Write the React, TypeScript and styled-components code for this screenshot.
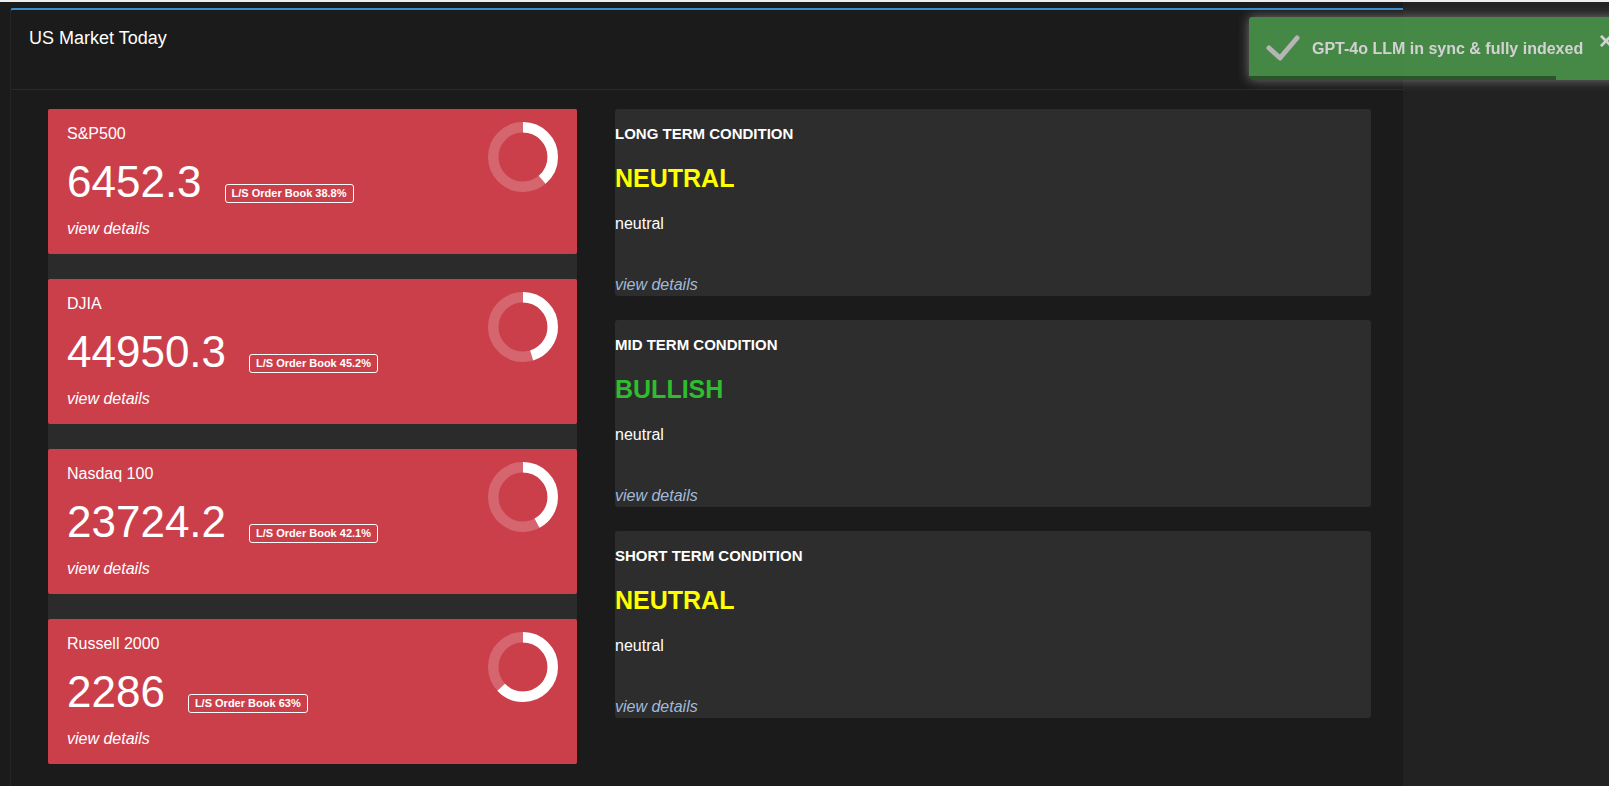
import React from "react";
import styled, { createGlobalStyle } from "styled-components";

const GlobalStyle = createGlobalStyle`
  html, body {
    margin: 0;
    padding: 0;
    overflow: hidden;
    background: #222222;
    font-family: "Liberation Sans", Arial, sans-serif;
  }
`;

type IndexCard = {
  name: string;
  value: string;
  book: number;
};

type Condition = {
  title: string;
  state: string;
  tone: "neutral" | "bullish";
  note: string;
};

const indexes: IndexCard[] = [
  { name: "S&P500", value: "6452.3", book: 38.8 },
  { name: "DJIA", value: "44950.3", book: 45.2 },
  { name: "Nasdaq 100", value: "23724.2", book: 42.1 },
  { name: "Russell 2000", value: "2286", book: 63 },
];

const conditions: Condition[] = [
  { title: "LONG TERM CONDITION", state: "NEUTRAL", tone: "neutral", note: "neutral" },
  { title: "MID TERM CONDITION", state: "BULLISH", tone: "bullish", note: "neutral" },
  { title: "SHORT TERM CONDITION", state: "NEUTRAL", tone: "neutral", note: "neutral" },
];

function Donut({ percent }: { percent: number }) {
  const r = 29.75;
  const circ = 2 * Math.PI * r;
  const filled = (percent / 100) * circ;
  return (
    <DonutSvg width="70" height="70" viewBox="0 0 70 70">
      <circle cx="35" cy="35" r={r} fill="none" stroke="rgba(255,255,255,0.2)" strokeWidth="10.5" />
      <circle
        cx="35"
        cy="35"
        r={r}
        fill="none"
        stroke="#ffffff"
        strokeWidth="10.5"
        strokeDasharray={`${filled} ${circ}`}
        transform="rotate(-90 35 35)"
      />
    </DonutSvg>
  );
}

export default function App() {
  return (
    <>
      <GlobalStyle />
      <TopStrip />
      <Layout>
        <Main>
          <Panel>
            <PanelHeader>
              <PanelTitle>US Market Today</PanelTitle>
            </PanelHeader>
            <PanelBody>
              <IndexColumn>
                {indexes.map((item) => (
                  <MarketCard key={item.name}>
                    <CardInfo>
                      <IndexName>{item.name}</IndexName>
                      <ValueRow>
                        <BigValue>{item.value}</BigValue>
                        <BookBadge>L/S Order Book {item.book}%</BookBadge>
                      </ValueRow>
                      <CardLink>view details</CardLink>
                    </CardInfo>
                    <Donut percent={item.book} />
                  </MarketCard>
                ))}
              </IndexColumn>
              <ConditionColumn>
                {conditions.map((c) => (
                  <ConditionCard key={c.title}>
                    <ConditionTitle>{c.title}</ConditionTitle>
                    <ConditionState $tone={c.tone}>{c.state}</ConditionState>
                    <ConditionNote>{c.note}</ConditionNote>
                    <ConditionLink>view details</ConditionLink>
                  </ConditionCard>
                ))}
              </ConditionColumn>
            </PanelBody>
          </Panel>
        </Main>
        <Sidebar />
      </Layout>
      <Toast>
        <ToastCheck width="34" height="26" viewBox="0 0 34 26">
          <polyline
            points="3,13 14,23 31,3"
            fill="none"
            stroke="#dcdcdc"
            strokeWidth="5"
            strokeLinecap="round"
            strokeLinejoin="round"
          />
        </ToastCheck>
        <ToastText>GPT-4o LLM in sync &amp; fully indexed</ToastText>
        <ToastClose>×</ToastClose>
        <ToastProgress style={{ width: 307 }} />
      </Toast>
    </>
  );
}

const TopStrip = styled.div`
  height: 2px;
  background: #ededed;
`;

const Layout = styled.div`
  display: flex;
  height: 784px;
`;

const Main = styled.div`
  width: 1403px;
  background: #1b1b1b;
  padding: 6px 0 0 10px;
  box-sizing: border-box;
  display: flex;
`;

const Sidebar = styled.div`
  flex: 1;
  background: #222222;
`;

const Panel = styled.section`
  flex: 1;
  background: #1b1b1b;
  border-top: 2px solid #3a8fd3;
  border-left: 1px solid #252525;
  border-radius: 3px 0 0 0;
  display: flex;
  flex-direction: column;
`;

const PanelHeader = styled.header`
  height: 80px;
  box-sizing: border-box;
  padding: 18px 18px 0;
  border-bottom: 1px solid #2a2a2a;
`;

const PanelTitle = styled.h3`
  margin: 0;
  font-size: 18px;
  line-height: 20px;
  font-weight: normal;
  color: #ffffff;
`;

const PanelBody = styled.div`
  display: flex;
  align-items: flex-start;
  gap: 38px;
  padding: 19px 31px 0 37px;
`;

const IndexColumn = styled.div`
  width: 529px;
  display: flex;
  flex-direction: column;
  gap: 25px;
  background: #2b2b2b;
`;

const MarketCard = styled.div`
  height: 145px;
  box-sizing: border-box;
  background: #cb3f4b;
  border-radius: 2px;
  padding: 15px 19px 0;
  display: flex;
  justify-content: space-between;
  align-items: flex-start;
  color: #ffffff;
`;

const CardInfo = styled.div`
  display: flex;
  flex-direction: column;
`;

const IndexName = styled.div`
  font-size: 16px;
  line-height: 20px;
`;

const ValueRow = styled.div`
  display: flex;
  align-items: baseline;
  margin-top: 16px;
`;

const BigValue = styled.div`
  font-size: 44px;
  line-height: 44px;
`;

const BookBadge = styled.span`
  margin-left: 23px;
  border: 1px solid #ffffff;
  border-radius: 3px;
  padding: 2px 6px;
  font-size: 11px;
  line-height: 13px;
  font-weight: bold;
  white-space: nowrap;
`;

const CardLink = styled.a`
  margin-top: 15px;
  font-size: 16px;
  line-height: 20px;
  font-style: italic;
  color: #ffffff;
`;

const DonutSvg = styled.svg`
  display: block;
  margin-top: -2px;
`;

const ConditionColumn = styled.div`
  width: 756px;
  display: flex;
  flex-direction: column;
  gap: 24px;
`;

const ConditionCard = styled.div`
  height: 187px;
  box-sizing: border-box;
  background: #2d2d2d;
  border-radius: 3px;
  padding: 16px 0 1px;
  display: flex;
  flex-direction: column;
`;

const ConditionTitle = styled.div`
  font-size: 15px;
  line-height: 18px;
  font-weight: bold;
  color: #ffffff;
`;

const ConditionState = styled.div<{ $tone: "neutral" | "bullish" }>`
  margin-top: 21px;
  font-size: 25px;
  line-height: 28px;
  font-weight: bold;
  color: ${(p) => (p.$tone === "bullish" ? "#2dbd2d" : "#ffff00")};
`;

const ConditionNote = styled.div`
  margin-top: 22px;
  font-size: 16px;
  line-height: 20px;
  color: #ffffff;
`;

const ConditionLink = styled.a`
  margin-top: auto;
  font-size: 16px;
  line-height: 20px;
  font-style: italic;
  color: #a3b9d8;
`;

const Toast = styled.div`
  position: fixed;
  top: 17px;
  left: 1249px;
  width: 380px;
  height: 63px;
  box-sizing: border-box;
  padding: 22px 0 0 63px;
  background: #51a351;
  opacity: 0.8;
  border-radius: 3px;
  box-shadow: 0 0 12px #8a8a8a;
  color: #ffffff;
`;

const ToastCheck = styled.svg`
  position: absolute;
  left: 17px;
  top: 18px;
`;

const ToastText = styled.div`
  font-size: 16px;
  line-height: 20px;
  font-weight: bold;
  white-space: nowrap;
`;

const ToastClose = styled.span`
  position: absolute;
  left: 350px;
  top: 12px;
  font-size: 24px;
  line-height: 24px;
  font-weight: bold;
  color: #ffffff;
`;

const ToastProgress = styled.div`
  position: absolute;
  left: 0;
  bottom: 0;
  height: 4px;
  background: #000000;
  opacity: 0.4;
`;
